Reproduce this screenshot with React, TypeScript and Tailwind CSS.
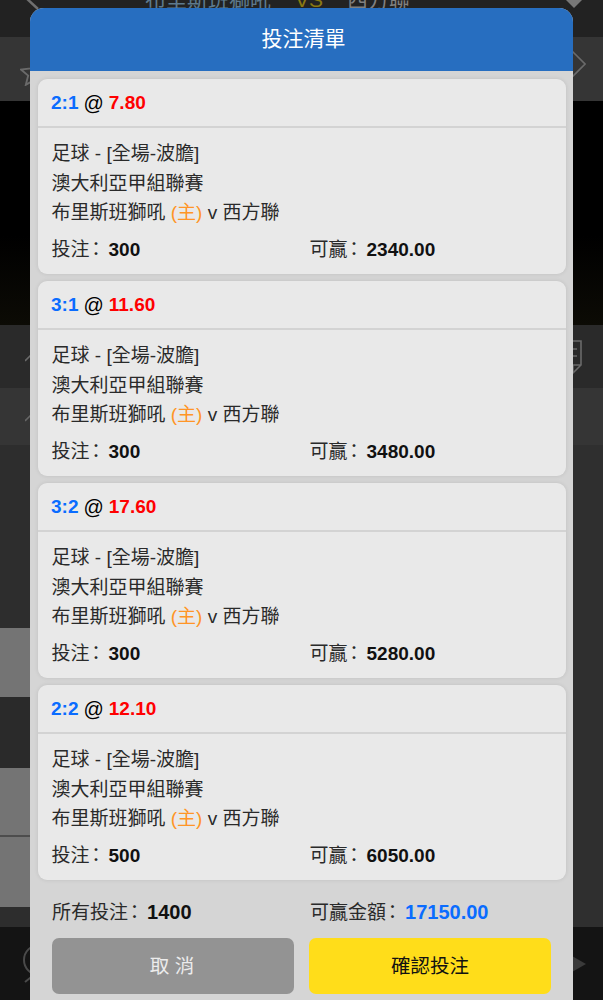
const bets = [
  { pick: "2:1", odds: "7.80", stake: "300", win: "2340.00" },
  { pick: "3:1", odds: "11.60", stake: "300", win: "3480.00" },
  { pick: "3:2", odds: "17.60", stake: "300", win: "5280.00" },
  { pick: "2:2", odds: "12.10", stake: "500", win: "6050.00" },
];

function Colon() {
  return <span className="inline-block w-[19px] indent-[-3px]">：</span>;
}

function BetCard({ pick, odds, stake, win }: { pick: string; odds: string; stake: string; win: string }) {
  return (
    <div className="h-[195px] rounded-[9px] bg-[#e9e9e9] shadow-[0_0_4px_rgba(0,0,0,0.1)]">
      <div className="flex h-[49px] items-center border-b-2 border-[#d3d3d3] px-[13px] text-[19px] leading-[30px]">
        <span className="font-bold text-[#0a6cff]">{pick}</span>
        <span className="mx-[5px] text-[20px] text-[#000]">@</span>
        <span className="font-bold text-[#ff0000]">{odds}</span>
      </div>
      <div className="px-[13.5px] pt-[11px] text-[19px] leading-[29.5px] text-[#2a2a2a]">
        <div>足球 - [全場-波膽]</div>
        <div>澳大利亞甲組聯賽</div>
        <div>
          布里斯班獅吼 <span className="text-[#ff9526]">(主)</span> v 西方聯
        </div>
        <div className="mt-[7px] flex">
          <div className="w-[258px]">
            投注<Colon />
            <span className="font-bold text-[#111]">{stake}</span>
          </div>
          <div>
            可贏<Colon />
            <span className="font-bold text-[#111]">{win}</span>
          </div>
        </div>
      </div>
    </div>
  );
}

function Background() {
  return (
    <div className="flex h-[1000px] flex-col">
      <div className="flex h-[37px] shrink-0 items-start justify-between overflow-hidden bg-[#222222] pl-[24px] pr-[16px]">
        <svg width="16" height="20" viewBox="0 0 16 20" fill="none" stroke="#6f6f6f" strokeWidth="2.5">
          <path d="M1 -3 L14 9" />
        </svg>
        <div className="-mt-[11px] ml-[-46px] flex text-[21px] leading-[21px]">
          <span className="text-[#5d7a8e]">布里斯班獅吼</span>
          <span className="mx-[24px] text-[#8a7a12]">VS</span>
          <span className="text-[#808080]">西方聯</span>
        </div>
        <svg width="26" height="16" viewBox="0 0 26 16" fill="#777777">
          <path d="M3 -2 L13 8 L23 -2 Z" />
        </svg>
      </div>
      <div className="flex h-[64px] shrink-0 items-center justify-between bg-[#353535] pl-[20px] pr-[17px]">
        <svg width="28" height="28" viewBox="0 0 24 24" fill="none" stroke="#6a6a6a" strokeWidth="1.6" className="mt-[6px]">
          <path d="M12 2 L15 9 L23 10 L17 15 L19 23 L12 19 L5 23 L7 15 L1 10 L9 9 Z" />
        </svg>
        <svg width="26" height="32" viewBox="0 0 26 32" fill="none" stroke="#6a6a6a" strokeWidth="1.6" className="-mt-[8px]">
          <path d="M13 3 L25 15 L13 27 L3 17 L3 7 Z" />
        </svg>
      </div>
      <div className="h-[224px] shrink-0 bg-[linear-gradient(180deg,#000000_0%,#000000_60%,#0c0b05_100%)]" />
      <div className="flex h-[63px] shrink-0 items-center justify-between bg-[#2a2a2a] pl-[25px] pr-[20px]">
        <svg width="12" height="12" viewBox="0 0 12 12" fill="none" stroke="#6a6a6a" strokeWidth="1.6">
          <path d="M0 10 L7 3" />
        </svg>
        <svg width="24" height="36" viewBox="0 0 24 36" fill="none" stroke="#6a6a6a" strokeWidth="1.6">
          <path d="M2 2 H22 V26 L14 34 H2 Z M14 34 V26 H22 M4 10 H18 M4 17 H18" />
        </svg>
      </div>
      <div className="flex h-[57px] shrink-0 items-center bg-[#353535] pl-[25px]">
        <svg width="12" height="12" viewBox="0 0 12 12" fill="none" stroke="#666666" strokeWidth="1.6">
          <path d="M0 10 L7 3" />
        </svg>
      </div>
      <div className="flex h-[482px] shrink-0">
        <div className="flex w-1/2 flex-col">
          <div className="h-[183px] bg-[#2d2d2d]" />
          <div className="h-[69px] bg-[#747474]" />
          <div className="h-[71px] bg-[#2a2a2a]" />
          <div className="h-[69px] border-b-2 border-[#4d4d4d] bg-[#747474]" />
          <div className="h-[70px] bg-[#747474]" />
          <div className="h-[20px] bg-[#2d2d2d]" />
        </div>
        <div className="w-1/2 bg-[#2f2f2f]" />
      </div>
      <div className="flex flex-1 items-center justify-between bg-[#141414] pl-[21px] pr-[17px]">
        <svg width="34" height="40" viewBox="0 0 34 40" fill="none" stroke="#4a4a4a" strokeWidth="2">
          <circle cx="18" cy="16" r="15" />
          <path d="M14 30 L4 38" />
        </svg>
        <svg width="14" height="16" viewBox="0 0 14 16" fill="#3a3a3a">
          <path d="M0 0 L14 8 L0 16 Z" />
        </svg>
      </div>
    </div>
  );
}

export default function App() {
  return (
    <div
      lang="zh-Hant"
      className="relative h-[1000px] w-[603px] overflow-hidden bg-[#2d2d2d] font-['Liberation_Sans','Noto_Sans_CJK_TC',sans-serif]"
    >
      <Background />
      <div className="absolute left-[30px] top-[8px] w-[543px] rounded-t-[14px] bg-[#d5d5d5] pb-[20px]">
        <div className="flex h-[63px] items-center justify-center rounded-t-[14px] bg-[#276ec0] pb-[1px] pl-[4px] text-[21px] text-white">
          投注清單
        </div>
        <div className="ml-[8px] mr-[7px] flex flex-col gap-[7px] pt-[8px]">
          {bets.map((b) => (
            <BetCard key={b.pick} {...b} />
          ))}
        </div>
        <div className="px-[22px] pt-[17px] text-[19px] leading-[30px] text-[#2a2a2a]">
          <div className="flex">
            <div className="w-[258px]">
              所有投注<Colon />
              <span className="text-[20px] font-bold text-[#111]">1400</span>
            </div>
            <div>
              可贏金額<Colon />
              <span className="text-[20px] font-bold text-[#0a6cff]">17150.00</span>
            </div>
          </div>
          <div className="mt-[10px] grid grid-cols-2 gap-[15px]">
            <div className="flex h-[56px] items-center justify-center rounded-[7px] bg-[#939393] pr-[2px] text-[19.5px] text-[#ececec]">
              取 消
            </div>
            <div className="flex h-[56px] items-center justify-center rounded-[7px] bg-[#ffdd1a] text-[19.5px] text-[#111]">
              確認投注
            </div>
          </div>
        </div>
      </div>
    </div>
  );
}
